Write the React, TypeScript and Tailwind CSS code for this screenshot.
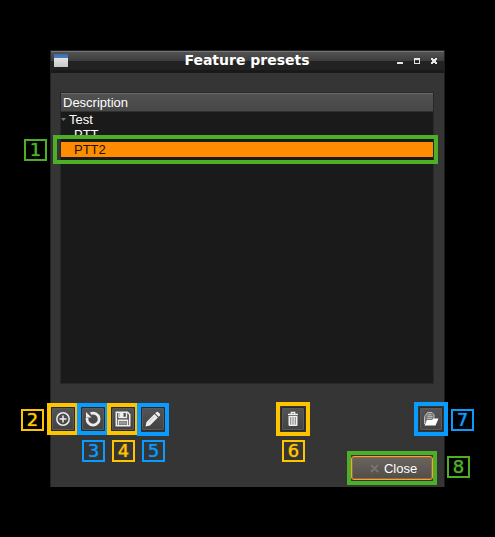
import type { ReactNode } from "react";

const tones = {
  green: "border-[#4caf25] text-[#4caf25]",
  yellow: "border-[#ffc400] text-[#ffc400]",
  blue: "border-[#0a9bff] text-[#0a9bff]",
};

type Tone = keyof typeof tones;

/** Numbered annotation: a thick frame over a control and a digit beside it. */
function Callout({ n, tone, frame, badge }: { n: number; tone: Tone; frame: string; badge: string }) {
  return (
    <>
      <span className={`pointer-events-none absolute z-10 border-4 ${tones[tone]} ${frame}`} />
      <span
        className={`pointer-events-none absolute z-10 flex h-[22px] w-[23px] items-center justify-center border-2 font-['DejaVu_Sans',sans-serif] text-[18px] leading-none [text-shadow:0_0_1px_currentColor] ${tones[tone]} ${badge}`}
      >
        {n}
      </span>
    </>
  );
}

type ToolProps = { label: string; n: number; tone: Tone; frame?: string; badge: string; children: ReactNode };

function Tool({ label, n, tone, frame = "-inset-1", badge, children }: ToolProps) {
  return (
    <div className="relative h-6 w-6">
      <button
        type="button"
        aria-label={label}
        className="flex h-6 w-6 items-center justify-center rounded-xs border border-[#292929] bg-linear-to-b from-[#545454] to-[#424242] text-[#ededed] shadow-[inset_0_0_0_1px_#5a5a5a]"
      >
        <svg viewBox="0 0 16 16" className="h-4 w-4" fill="none" stroke="currentColor" aria-hidden="true">
          {children}
        </svg>
      </button>
      <Callout n={n} tone={tone} frame={frame} badge={badge} />
    </div>
  );
}

const below = "left-px top-[33px]";

export default function App() {
  return (
    <main className="min-h-screen bg-black py-[50px] pr-[50px] pl-[50px] font-['Liberation_Sans',Arial,sans-serif] text-[13px] leading-[15px] text-white">
      <section className="border-x border-l-[#222] border-r-[#1c1c1c] bg-[#353535]">
        <header className="flex h-[23px] items-start border-t border-b-[3px] border-t-[#222] border-b-[#191919] bg-[linear-gradient(to_bottom,#757575_0,#757575_1px,#535353_1px,#3c3c3c_10px,#222_10px,#222_100%)] pr-[7px] pl-[3px]">
          <span className="mt-[3px] h-[13px] w-[14px] bg-[linear-gradient(to_bottom,#3d6ba8_0,#4c7ebc_4px,#e4e4e4_4px,#c5cacd_100%)]" />
          <h1 className="flex-1 pl-[29px] text-center font-['DejaVu_Sans',sans-serif] text-[14px] leading-[18px] font-bold">
            Feature presets
          </h1>
          <div className="flex gap-[11px] pt-[7px] text-[#e5e5e2]">
            <button type="button" aria-label="Minimize">
              <svg className="block h-[6px] w-[6px]" viewBox="0 0 6 6"><path d="M0 4h6v2H0z" fill="currentColor" /></svg>
            </button>
            <button type="button" aria-label="Maximize">
              <svg className="block h-[6px] w-[6px]" viewBox="0 0 6 6"><path fillRule="evenodd" d="M0 0h6v6H0zM1 2v3h4V2z" fill="currentColor" /></svg>
            </button>
            <button type="button" aria-label="Close window">
              <svg className="block h-[6px] w-[6px]" viewBox="0 0 6 6"><path d="M0 0h2v1h2V0h2v2H5v2h1v2H4V5H2v1H0V4h1V2H0z" fill="currentColor" /></svg>
            </button>
          </div>
        </header>

        <div className="pt-[19px] pr-[10px] pl-[9px]">
          <div className="h-[292px] border border-[#292929] bg-[#1a1a1a]">
            <div className="h-[19px] border-t border-b border-t-[#686868] border-b-[#303030] bg-linear-to-b from-[#515151] to-[#474747] pl-[2px] leading-[17px]">
              Description
            </div>
            <ul role="tree" aria-label="Feature presets">
              <li role="treeitem" aria-expanded="true" aria-selected="false">
                <span className="flex items-center">
                  <svg className="mr-[3px] h-[5px] w-[5px]" viewBox="0 0 5 5"><path d="M0 1h5L2.5 4z" fill="#777" /></svg>
                  Test
                </span>
                <ul role="group">
                  <li role="treeitem" aria-selected="false" className="pl-[13px]">PTT</li>
                  <li role="treeitem" aria-selected="true" className="relative bg-[#ff8c00] pl-[13px] text-[#161616]">
                    PTT2
                    <Callout n={1} tone="green" frame="-top-[7px] -bottom-[7px] -left-2 -right-[5px]" badge="-left-[37px] -top-[3px]" />
                  </li>
                </ul>
              </li>
            </ul>
          </div>
        </div>

        <div className="mt-[23px] flex justify-between pr-px">
          <div className="flex gap-[6px] pr-[2px]">
            <Tool label="Add preset" n={2} tone="yellow" badge="-left-[30px] top-[2px]">
              <circle cx="8" cy="8" r="6.2" strokeWidth="1.5" />
              <path d="M8 4.5v7M4.5 8h7" strokeWidth="1.5" />
            </Tool>
            <Tool label="Reload preset" n={3} tone="blue" badge={below}>
              <path d="M5.6 2.6A6 6 0 1 1 2.2 6.8" strokeWidth="2.7" />
              <path d="M1 1v5.500h5.500z" fill="currentColor" stroke="none" />
            </Tool>
            <Tool label="Save preset" n={4} tone="yellow" badge={below}>
              <path d="M1.3 1.3h11.2l2.2 2.2v11.2H1.3z" strokeWidth="1.6" />
              <path d="M4 1.500v5h7.500v-5M3.500 14.500V9.300h9v5.200" strokeWidth="1.400" />
              <path d="M5 2h3.500v4H5z" fill="currentColor" stroke="none" />
              <path d="M4.500 10.200h7v3.500h-7z" fill="#999" stroke="none" />
            </Tool>
            <Tool label="Edit preset" n={5} tone="blue" frame="-inset-x-1 -top-1 -bottom-[5px]" badge={below}>
              <path d="M.5 15.500l1-4.500 7.900-7.900L12.900 6.600 5 14.500zM10.200 2.300l1.100-1.100q1-.9 2 0l1.500 1.500q.9 1 0 2l-1.100 1.100z" fill="currentColor" stroke="none" />
              <path d="M3.600 11.200L9.400 5.400" stroke="#aaa" strokeWidth=".6" />
            </Tool>
          </div>
          <Tool label="Delete preset" n={6} tone="yellow" frame="-inset-[5px]" badge={below}>
            <path d="M3 3.300h10M6.300 3V1.500h3.400V3" strokeWidth="1.300" />
            <path d="M3.500 4.700h9V14q0 1-1 1h-7q-1 0-1-1z" fill="currentColor" stroke="none" />
            <path d="M5.700 6v7.700M8 6v7.700M10.300 6v7.700" stroke="#666" strokeWidth=".8" />
          </Tool>
          <Tool label="Open presets folder" n={7} tone="blue" frame="-inset-[5px]" badge="left-8 top-[2px]">
            <path d="M1.500 13V5.500L4.500 1.500H9l2 2v4.500" fill="#777" stroke="#bbb" />
            <path d="M4.500 3.800h4M4.500 5.600h5M4 7.400h5" stroke="#ccc" strokeWidth=".8" />
            <path d="M4 9h5l1.500-1.500H15.500L12.500 14.500H1.500z" fill="#fff" stroke="none" />
          </Tool>
        </div>

        <div className="flex justify-end pt-[25px] pr-[11px] pb-[7px]">
          <div className="relative">
            <button
              type="button"
              className="flex h-6 w-[82px] items-center justify-center gap-[5px] rounded-[3px] border border-[#ffa033] bg-linear-to-b from-[#6b655f] to-[#514d48] pl-[3px] text-white shadow-[inset_0_0_0_1px_#8b6a45]"
            >
              <svg className="h-[9px] w-[9px]" viewBox="0 0 9 9" aria-hidden="true">
                <path d="M1 1l7 7M8 1L1 8" stroke="#77736f" strokeWidth="2" />
              </svg>
              Close
            </button>
            <Callout n={8} tone="green" frame="-inset-x-1 -inset-y-[5px]" badge="left-24 top-0" />
          </div>
        </div>
      </section>
    </main>
  );
}
